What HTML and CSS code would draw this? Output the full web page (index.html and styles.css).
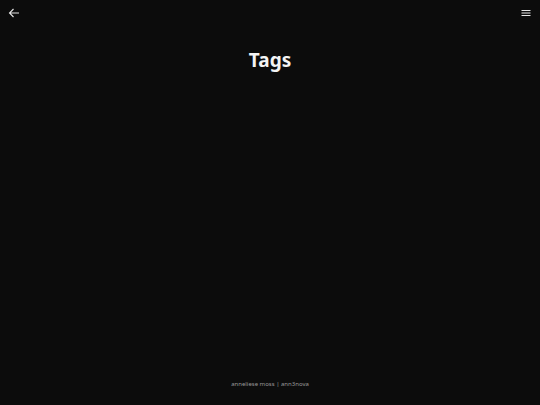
FILE: index.html
```html
<!DOCTYPE html>
<html>
<head>
<meta charset="utf-8">
<link rel="stylesheet" href="styles.css">
</head>
<body>
<div class="page">
  <header class="topbar">
    <a class="icon-btn" href="#" aria-label="Back">
      <svg width="12" height="12" viewBox="0 0 12 12"><path d="M11 6H1.5M5.5 2L1.5 6l4 4" fill="none" stroke="#e6e6e6" stroke-width="1.1"/></svg>
    </a>
    <a class="icon-btn" href="#" aria-label="Menu">
      <svg width="12" height="12" viewBox="0 0 12 12"><path d="M1.5 3.5h9M1.5 6h9M1.5 8.5h9" fill="none" stroke="#e6e6e6" stroke-width="1"/></svg>
    </a>
  </header>
  <main class="content">
    <h1 class="title">Tags</h1>
  </main>
  <footer class="footer">anneliese moss | ann3nova</footer>
</div>
</body>
</html>
```
FILE: styles.css
```css
html, body {
  margin: 0;
  padding: 0;
  background: #0c0c0c;
  height: 100%;
}
.page {
  display: flex;
  flex-direction: column;
  height: 405px;
  font-family: "Noto Sans", "Open Sans", sans-serif;
  color: #fff;
}
.topbar {
  display: flex;
  justify-content: space-between;
  align-items: center;
  padding: 7px 8px 0 8px;
  height: 12px;
}
.icon-btn {
  display: flex;
  width: 12px;
  height: 12px;
}
.content {
  flex: 1;
}
.title {
  margin: 27px 0 0 0;
  text-align: center;
  font-size: 19px;
  font-weight: 700;
  line-height: 28px;
  color: #f4f4f4;
}
.footer {
  text-align: center;
  font-size: 6px;
  color: #9a9a9a;
  padding-bottom: 16px;
  line-height: 10px;
}
```
